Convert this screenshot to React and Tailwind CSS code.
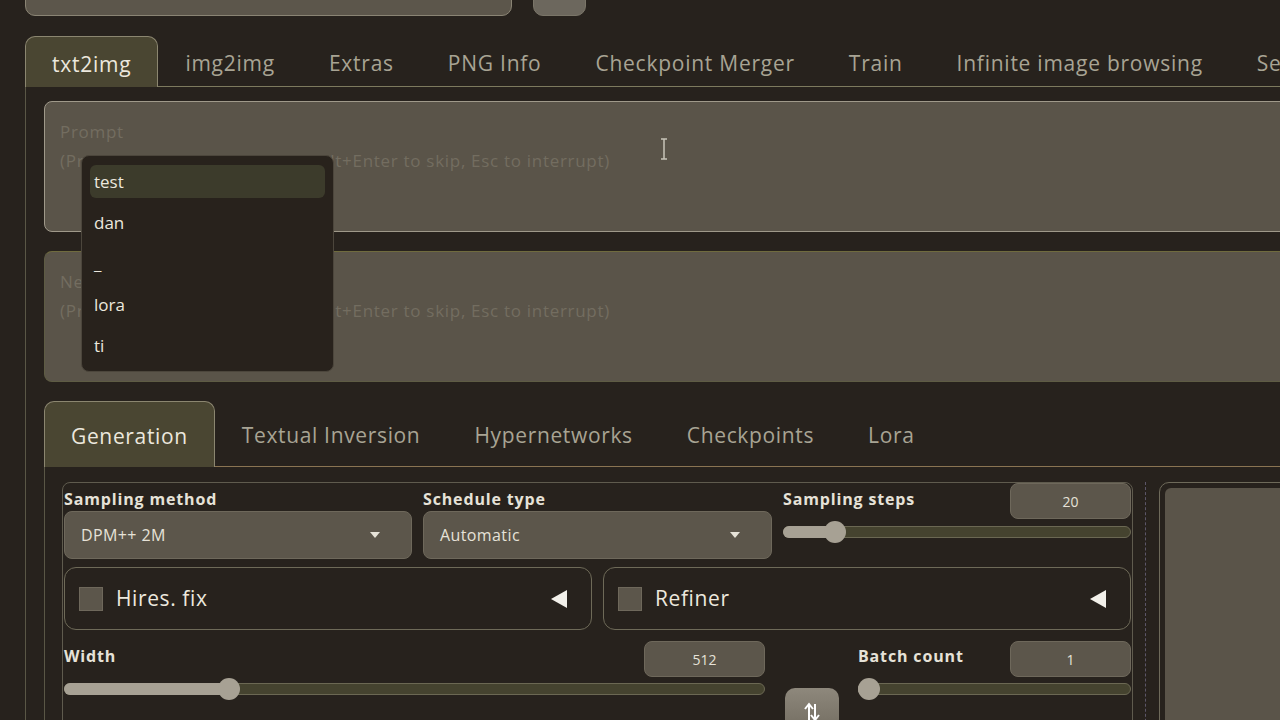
import React from "react";

const font = { fontFamily: "'Open Sans', Lato, sans-serif" };

function Slider({ pct }) {
  return (
    <div className="relative h-[22px] flex items-center">
      <div className="w-full h-[12px] rounded-full bg-[#45432f] border border-[#6b6853]" />
      <div
        className="absolute left-0 h-[12px] rounded-full bg-[#a7a194]"
        style={{ width: `${pct}%` }}
      />
      <div
        className="absolute w-[22px] h-[22px] rounded-full bg-[#a7a194] -translate-x-1/2"
        style={{ left: `${pct}%` }}
      />
    </div>
  );
}

function NumBox({ v }) {
  return (
    <div className="w-[121px] h-[36px] rounded-[8px] bg-[#5c564b] border border-[#6e685b] flex items-center justify-center text-[14px] text-[#e6e2d8]">
      {v}
    </div>
  );
}

function Select({ v }) {
  return (
    <div className="h-[48px] rounded-[8px] bg-[#5c564b] border border-[#6e685b] flex items-center justify-between pl-[16px] pr-[30px] text-[16px] tracking-[0.4px] text-[#e6e2d8]">
      <span>{v}</span>
      <svg width="12" height="8" viewBox="0 0 12 8">
        <path d="M1 1 L11 1 L6 7 Z" fill="#e6e2d8" />
      </svg>
    </div>
  );
}

function Label({ children, className = "" }) {
  return (
    <div className={`text-[16px] font-bold text-[#e6e2d8] tracking-[0.85px] ${className}`}>
      {children}
    </div>
  );
}

function Accordion({ label }) {
  return (
    <div className="flex-1 h-[63px] rounded-[12px] border border-[#6e6a58] flex items-center pl-[14px] pr-[22px]">
      <div className="w-[24px] h-[24px] bg-[#5c564b] border border-[#6e685b]" />
      <span className="ml-[13px] text-[21px] tracking-[0.6px] text-[#ece8de]">{label}</span>
      <span className="ml-auto">
        <svg width="20" height="20" viewBox="0 0 20 20">
          <path d="M18 1 L18 19 L2 10 Z" fill="#f2f0ea" />
        </svg>
      </span>
    </div>
  );
}

export default function App() {
  const outerTabs = [
    "img2img",
    "Extras",
    "PNG Info",
    "Checkpoint Merger",
    "Train",
    "Infinite image browsing",
    "Settings",
  ];
  const innerTabs = ["Textual Inversion", "Hypernetworks", "Checkpoints", "Lora"];
  const menu = ["test", "dan", "_", "lora", "ti"];
  return (
    <div
      className="w-[1280px] h-[720px] overflow-hidden bg-[#27221d] text-[#d8d4ca]"
      style={font}
    >
      {/* top row */}
      <div className="h-[36px] flex items-start pl-[25px]">
        <div className="w-[487px] h-[40px] -mt-[24px] rounded-b-[10px] bg-[#5c564b] border border-[#8a8474]" />
        <div className="ml-[21px] w-[53px] h-[40px] -mt-[24px] rounded-b-[10px] bg-[#6c675d] border border-[#7a7568]" />
      </div>

      {/* outer tabs */}
      <div className="pl-[25px] w-[1400px]">
        <div className="flex h-[51px] items-stretch border-b border-[#7d7a5e] whitespace-nowrap text-[21px] tracking-[0.75px]">
          <div className="px-[26px] pt-[5px] flex items-center bg-[#4a4632] border border-b-0 border-[#8b8670] rounded-t-[10px] text-[#ece8de] -mb-px">
            txt2img
          </div>
          {outerTabs.map((t) => (
            <div key={t} className="px-[27px] pt-[5px] flex items-center text-[#a8a494]">
              {t}
            </div>
          ))}
        </div>

        {/* outer panel */}
        <div className="border-l border-[#5a5746] pl-[18px] pt-[14px]">
          {/* prompt */}
          <div className="relative h-[131px] rounded-[8px] bg-[#5a5449] border border-[#9f998a] pl-[15px] pt-[15px] text-[17px] tracking-[0.7px] text-[#736d60] leading-[29px]">
            <div>Prompt</div>
            <div>(Press Ctrl+Enter to generate, Alt+Enter to skip, Esc to interrupt)</div>
            <svg className="absolute left-[614px] top-[36px]" width="10" height="22" viewBox="0 0 10 22">
              <path d="M2 1 H8 M5 1 V21 M2 21 H8" stroke="#c8c4b8" strokeWidth="1.5" fill="none" />
            </svg>
            {/* autocomplete popup */}
            <div className="absolute left-[36px] top-[53px] z-10 w-[253px] h-[217px] rounded-[8px] bg-[#28221c] border border-[#4c463c] px-[8px] pt-[5px] tracking-normal">
              {menu.map((m, i) =>
                i === 0 ? (
                  <div key={m} className="h-[41px] flex items-center">
                    <div className="w-full h-[33px] flex items-center pl-[4px] rounded-[6px] bg-[#3c3b2b] text-[17px] text-[#ece8de]">
                      {m}
                    </div>
                  </div>
                ) : (
                  <div key={m} className="h-[41px] flex items-center pl-[4px] text-[17px] text-[#ece8de]">
                    {m}
                  </div>
                )
              )}
            </div>
          </div>

          {/* negative prompt */}
          <div className="mt-[19px] h-[131px] rounded-[8px] bg-[#5a5449] border border-[#5e5c44] border-t-[#6f6b3e] pl-[15px] pt-[15px] text-[17px] tracking-[0.7px] text-[#736d60] leading-[29px]">
            <div>Negative prompt</div>
            <div>(Press Ctrl+Enter to generate, Alt+Enter to skip, Esc to interrupt)</div>
          </div>

          {/* inner tabs */}
          <div className="mt-[19px] flex h-[66px] items-stretch border-b border-[#8a7452] whitespace-nowrap text-[21px] tracking-[0.65px]">
            <div className="px-[26px] pt-[5px] flex items-center bg-[#4a4632] border border-b-0 border-[#8b8670] rounded-t-[10px] text-[#ece8de] -mb-px">
              Generation
            </div>
            {innerTabs.map((t) => (
              <div key={t} className="px-[27px] pt-[5px] flex items-center text-[#a8a494]">
                {t}
              </div>
            ))}
          </div>

          {/* inner panel */}
          <div className="border-l border-[#5a5746] pl-[17px] pt-[15px] flex items-start">
            {/* settings column */}
            <div className="w-[1071px] h-[260px] rounded-[8px] border border-[#5f5b4e] pl-px pr-px">
              {/* row 1 */}
              <div className="flex gap-[11px]">
                <div className="w-[348px] pt-[4px]">
                  <Label className="h-[24px]">Sampling method</Label>
                  <Select v="DPM++ 2M" />
                </div>
                <div className="w-[349px] pt-[4px]">
                  <Label className="h-[24px]">Schedule type</Label>
                  <Select v="Automatic" />
                </div>
                <div className="w-[348px]">
                  <div className="flex items-start justify-between">
                    <Label className="pt-[4px]">Sampling steps</Label>
                    <NumBox v="20" />
                  </div>
                  <div className="mt-[2px]">
                    <Slider pct={15} />
                  </div>
                </div>
              </div>
              {/* row 2 */}
              <div className="mt-[8px] flex gap-[11px]">
                <Accordion label="Hires. fix" />
                <Accordion label="Refiner" />
              </div>
              {/* row 3 */}
              <div className="mt-[11px] flex">
                <div className="w-[701px]">
                  <div className="flex items-start justify-between">
                    <Label className="pt-[3px]">Width</Label>
                    <NumBox v="512" />
                  </div>
                  <div className="mt-[1px]">
                    <Slider pct={23.6} />
                  </div>
                </div>
                <div className="ml-[20px] mt-[47px] w-[54px] h-[50px] rounded-[10px] bg-gradient-to-b from-[#8e887c] to-[#6f695d] flex justify-center pt-[14px]">
                  <svg width="16" height="20" viewBox="0 0 16 20">
                    <path d="M5 18 V3 M1 7 L5 2 L9 7" stroke="#fff" strokeWidth="2" fill="none" />
                    <path d="M11 2 V17 M7 13 L11 18 L15 13" stroke="#fff" strokeWidth="2" fill="none" />
                  </svg>
                </div>
                <div className="ml-[19px] w-[273px]">
                  <div className="flex items-start justify-between">
                    <Label className="pt-[3px]">Batch count</Label>
                    <NumBox v="1" />
                  </div>
                  <div className="mt-[1px]">
                    <Slider pct={4} />
                  </div>
                </div>
              </div>
            </div>
            {/* dashed divider */}
            <div className="ml-[12px] h-[260px] border-l border-dashed border-[#5c5668]" />
            {/* image panel */}
            <div className="ml-[13px] w-[200px] h-[260px] rounded-[10px] border border-[#6e6a5a] p-[5px]">
              <div className="w-full h-full rounded-[6px] bg-[#5a5449]" />
            </div>
          </div>
        </div>
      </div>
    </div>
  );
}
